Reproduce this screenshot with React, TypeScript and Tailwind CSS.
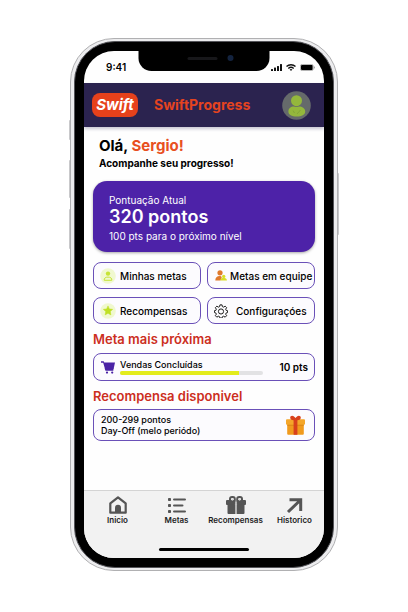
import React from "react";

type SideButtonProps = { className: string };

const Signal = () => (
  <svg className="h-[7px] w-[11px]" viewBox="0 0 11 7" fill="#111" aria-hidden="true">
    <rect x="0" y="5" width="2" height="2" rx=".5" />
    <rect x="3" y="3.6" width="2" height="3.4" rx=".5" />
    <rect x="6" y="2" width="2" height="5" rx=".5" />
    <rect x="9" y="0" width="2" height="7" rx=".5" />
  </svg>
);

const Wifi = () => (
  <svg className="h-[7px] w-[10px]" viewBox="0 0 20 14" fill="none" stroke="#111" strokeWidth="2.8" aria-hidden="true">
    <path d="M1 5.2a13 13 0 0 1 18 0" />
    <path d="M4.6 8.8a8 8 0 0 1 10.8 0" />
    <path d="M10 14 7.3 11.2a4 4 0 0 1 5.4 0z" fill="#111" stroke="none" />
  </svg>
);

const Battery = () => (
  <svg className="h-[7px] w-[15px]" viewBox="0 0 15 7" aria-hidden="true">
    <rect x=".4" y=".4" width="12.8" height="6.2" rx="1.8" fill="none" stroke="#888" strokeWidth=".7" />
    <rect x="1" y="1" width="11.6" height="5" rx="1" fill="#000" />
    <path d="M14 2.3c.9.3.9 2.1 0 2.4z" fill="#777" />
  </svg>
);

const Avatar = () => (
  <svg className="size-[29px]" viewBox="0 0 29 29" aria-hidden="true">
    <circle cx="14.5" cy="14.5" r="14.3" fill="#656a6b" />
    <circle cx="14.5" cy="9.7" r="5.5" fill="#94b83c" />
    <path
      d="M6.4 20.6c0-3.4 2.7-5 5.3-5 1 0 1.9.5 2.8.5s1.800-.5 2.800-.5c2.600 0 5.900 1.600 5.900 5 0 3.200-3.500 5-8.500 5s-8.300-1.800-8.300-5z"
      fill="#94b83c"
    />
    <path d="m15 23 3.500-4M12.500 22 11 19.500" stroke="#7fa236" strokeWidth=".8" />
  </svg>
);

const PersonIcon = () => (
  <svg className="size-4 shrink-0" viewBox="0 0 16 16" aria-hidden="true">
    <circle cx="8" cy="8" r="7.8" fill="#f0f8cf" />
    <circle cx="8" cy="5.6" r="2.2" fill="#c6e436" />
    <path
      d="M4.200 12.300c-.4-2.200 1.500-3.200 3.800-3.200s4.200 1 3.800 3.200z"
      fill="none"
      stroke="#c6e436"
      strokeLinejoin="round"
    />
  </svg>
);

const StarIcon = () => (
  <svg className="size-4 shrink-0" viewBox="0 0 16 16" aria-hidden="true">
    <circle cx="8" cy="8" r="7.8" fill="#f0f8cf" />
    <path
      d="m8 2.900 1.400 3 3.300.4-2.400 2.300.6 3.300L8 10.300l-2.900 1.600.6-3.300-2.400-2.300 3.300-.4z"
      fill="#bfe025"
      stroke="#bfe025"
      strokeWidth=".5"
      strokeLinejoin="round"
    />
  </svg>
);

const TeamIcon = () => (
  <svg className="h-[11px] w-3 shrink-0" viewBox="0 0 12 11" aria-hidden="true">
    <circle cx="5" cy="2.8" r="2.600" fill="#e07a2c" />
    <path d="M.3 10.500C.3 7.600 2 6 4.500 6c1.300 0 2 .5 2.300 1.200l-1.300 3.300z" fill="#e07a2c" />
    <circle cx="8.700" cy="6.400" r="1.700" fill="#d9de26" />
    <path d="M5.500 10.500c0-1.900 1.200-2.700 3.100-2.700s3.300.8 3.300 2.700z" fill="#d9de26" />
  </svg>
);

const GearIcon = () => (
  <svg
    className="size-[14px] shrink-0"
    viewBox="0 0 24 24"
    fill="none"
    stroke="#1a1a1a"
    strokeWidth="1.700"
    strokeLinejoin="round"
    aria-hidden="true"
  >
    <path d="M10.200 1.500h3.600l.6 3 2.200.9 2.500-1.700 2.600 2.600-1.700 2.500.9 2.200 2.400.5v3.200l-2.400.6-.9 2.200 1.700 2.500-2.600 2.600-2.500-1.700-2.200.9-.6 2.400h-3.600l-.6-2.400-2.200-.9-2.500 1.700-2.600-2.600 1.700-2.500-.9-2.200-2.400-.6v-3.200l2.400-.5.9-2.200-1.700-2.500 2.600-2.600 2.500 1.700 2.200-.9z" />
    <circle cx="12" cy="12.800" r="4.400" />
  </svg>
);

const CartIcon = () => (
  <svg className="h-[13px] w-[14px] shrink-0" viewBox="0 0 14 13" fill="#4a23a5" aria-hidden="true">
    <path d="M0 .3h2.700l.5 1.300H14L12.600 8H4L2.200 1.700H0z" />
    <path d="M3.600 7.500h9l-.3 2.300H4.500z" />
    <circle cx="6" cy="11.600" r="1.100" />
    <circle cx="11.200" cy="11.600" r="1.100" />
  </svg>
);

const GiftColor = () => (
  <svg className="h-5 w-[19px]" viewBox="0 0 19 20" aria-hidden="true">
    <path d="M1.200 8.500h16.600v10.300q0 1-1 1H2.200q-1 0-1-1z" fill="#f09a1d" />
    <rect x="0" y="4.200" width="19" height="5.600" rx="1" fill="#f4a62a" />
    <path d="M1.200 9.800h16.600v.9H1.200z" fill="#d98616" />
    <rect x="7.600" y="4.200" width="3.800" height="15.600" fill="#d8401c" />
    <path
      d="M9.500 4.800C8 5.600 4.500 5.600 4.200 2.800 4 .7 6.500.2 7.700 1.300c.8.700 1.500 1.200 1.800 1.700.3-.5 1-1 1.800-1.700 1.200-1.100 3.700-.6 3.500 1.500-.3 2.800-3.800 2.800-5.300 2z"
      fill="#d8401c"
    />
  </svg>
);

const HomeIcon = () => (
  <svg className="size-[18px]" viewBox="0 0 18 18" aria-hidden="true">
    <path d="M1.300 7.300 9 1.300l7.700 6v9.400H1.300z" fill="none" stroke="#555" strokeWidth="2.200" strokeLinejoin="round" />
    <path d="M6 17v-5.200a3 3 0 0 1 6 0V17z" fill="#555" />
  </svg>
);

const ListIcon = () => (
  <svg className="size-[18px]" viewBox="0 0 18 18" fill="#555" aria-hidden="true">
    <rect x="0" y="2" width="3" height="3" rx=".8" />
    <rect x="0" y="8" width="3" height="3" rx=".8" />
    <rect x="0" y="14" width="3" height="3" rx=".8" />
    <rect x="5" y="2.400" width="13" height="2.200" rx="1.100" />
    <rect x="5" y="8.400" width="10.500" height="2.200" rx="1.100" />
    <rect x="5" y="14.400" width="13" height="2.200" rx="1.100" />
  </svg>
);

const GiftGray = () => (
  <svg className="h-[18px] w-5" viewBox="0 0 20 18" aria-hidden="true">
    <rect x="4" y="1" width="4.800" height="4.800" rx="2" fill="none" stroke="#555" strokeWidth="2" />
    <rect x="11.200" y="1" width="4.800" height="4.800" rx="2" fill="none" stroke="#555" strokeWidth="2" />
    <rect x="0" y="4" width="9.400" height="5" rx="1" fill="#555" />
    <rect x="10.600" y="4" width="9.400" height="5" rx="1" fill="#555" />
    <circle cx="6.400" cy="3.600" r="1.100" fill="#d8d8d8" />
    <circle cx="13.600" cy="3.600" r="1.100" fill="#d8d8d8" />
    <path d="M1.500 8.500h7.900V18H2.500q-1 0-1-1zM10.600 8.500h7.900V17q0 1-1 1h-6.900z" fill="#555" />
  </svg>
);

const ArrowIcon = () => (
  <svg className="size-[18px]" viewBox="0 0 18 18" fill="none" stroke="#555" strokeWidth="3" aria-hidden="true">
    <path d="M3.500 3.800h11.200V15M14.500 4 2 16" />
  </svg>
);

const actions = [
  { label: "Minhas metas", Icon: PersonIcon, row: "gap-1 pl-[6px]" },
  { label: "Metas em equipe", Icon: TeamIcon, row: "gap-[3px] pl-[7px]" },
  { label: "Recompensas", Icon: StarIcon, row: "gap-1 pl-[6px]" },
  { label: "Configuraçóes", Icon: GearIcon, row: "gap-2 pl-[6px]" },
];

const tabs = [
  { label: "Inicio", Icon: HomeIcon },
  { label: "Metas", Icon: ListIcon },
  { label: "Recompensas", Icon: GiftGray },
  { label: "Historico", Icon: ArrowIcon },
];

const SideButton = ({ className }: SideButtonProps) => (
  <span className={`absolute w-[2px] rounded-sm bg-[#c9c9cb] ${className}`} />
);

export default function App() {
  return (
    <div className="min-h-screen bg-white px-4 pt-[38px] pb-10 font-['Inter','Liberation_Sans',sans-serif] text-black">
      <div className="relative mx-auto aspect-[268/533] w-full max-w-[268px]">
        <SideButton className="top-[82px] -left-px h-5" />
        <SideButton className="top-[122px] -left-px h-[38px]" />
        <SideButton className="top-[171px] -left-px h-10" />
        <SideButton className="top-[135px] -right-px h-[62px]" />
        <div className="relative flex h-full rounded-[44px] border border-[#b0b0b2] bg-[#ececee] px-[3px] py-[2px]">
          <div className="flex w-full rounded-[41px] border border-[#55555a] bg-black px-[9px] py-[9px]">
            <div className="relative flex w-full flex-col overflow-hidden rounded-[30px] bg-[#fefefe]">
              <div className="absolute top-0 left-1/2 flex h-5 w-[131px] -translate-x-1/2 items-center gap-[10px] rounded-b-[13px] bg-black pb-[6px] pl-[49px]">
                <span className="h-[3px] w-[30px] rounded-full bg-[#17171a]" />
                <span className="size-[6px] rounded-full bg-[#13233f]" />
              </div>
              <div className="flex h-8 shrink-0 items-center justify-between pr-[9px] pl-[22px]">
                <span className="text-[10px] leading-3 font-semibold">9:41</span>
                <span className="flex items-center gap-1">
                  <Signal />
                  <Wifi />
                  <Battery />
                </span>
              </div>

              <header className="z-10 flex h-11 shrink-0 items-center bg-[#2b234f] pr-[13px] pl-2 shadow-[0_2px_3px_rgba(43,35,79,0.25)]">
                <span className="flex h-6 w-[46px] items-center justify-center rounded-lg bg-[#e6411b] text-[15px] leading-5 font-bold text-white italic">
                  Swift
                </span>
                <h1 className="ml-4 flex-1 text-[14px] leading-5 font-bold text-[#e5431f]">SwiftProgress</h1>
                <button type="button" aria-label="Perfil">
                  <Avatar />
                </button>
              </header>

              <main className="flex-1 px-[9px] pt-[9px]">
                <div className="px-[6px]">
                  <h2 className="text-[15px] leading-5 font-bold">
                    Olá, <span className="text-[#e8501f]">Sergio!</span>
                  </h2>
                  <p className="text-[10px] leading-[14px] font-bold">Acompanhe seu progresso!</p>
                </div>

                <section className="mt-[11px] rounded-[14px] bg-[#4d22a8] px-4 pt-3 pb-[9px] text-white shadow-[0_1px_3px_rgba(0,0,0,0.35)]">
                  <p className="text-[10px] leading-[14px]">Pontuação Atual</p>
                  <p className="text-[18px] leading-5 font-semibold">320 pontos</p>
                  <p className="mt-[2px] text-[10px] leading-[14px]">100 pts para o próximo nível</p>
                </section>

                <div className="mt-[10px] grid grid-cols-2 gap-x-[6px] gap-y-2">
                  {actions.map(({ label, Icon, row }) => (
                    <button
                      key={label}
                      type="button"
                      className={`flex h-[27px] items-center rounded-lg border border-[#6a50b8] bg-[#fcfbfe] text-[10px] leading-[14px] font-medium whitespace-nowrap ${row}`}
                    >
                      <Icon />
                      {label}
                    </button>
                  ))}
                </div>

                <h3 className="mt-[6px] text-[13px] leading-[18px] font-semibold text-[#cc2f1e]">Meta mais próxima</h3>
                <section className="mt-[5px] flex h-7 items-center rounded-lg border border-[#6a50b8] bg-[#fcfbfe] pr-[6px] pl-[7px]">
                  <CartIcon />
                  <div className="ml-[5px] w-[143px]">
                    <p className="text-[9px] leading-3 font-medium">Vendas Concluídas</p>
                    <div
                      role="progressbar"
                      aria-label="Vendas Concluídas"
                      aria-valuenow={83}
                      className="h-1 overflow-hidden rounded-full bg-[#e2e2e4]"
                    >
                      <div className="h-full w-5/6 bg-[#e3ec1c]" />
                    </div>
                  </div>
                  <span className="ml-auto text-[10px] leading-[14px] font-semibold">10 pts</span>
                </section>

                <h3 className="mt-[6px] text-[13px] leading-[18px] font-semibold text-[#cc2f1e]">
                  Recompensa disponivel
                </h3>
                <section className="mt-1 flex items-center justify-between rounded-lg border border-[#6a50b8] bg-[#fcfbfe] py-1 pr-[9px] pl-[7px]">
                  <p className="text-[9px] leading-[11px] font-medium">
                    200-299 pontos
                    <br />
                    Day-Off (melo periódo)
                  </p>
                  <GiftColor />
                </section>
              </main>

              <nav className="flex h-[68px] shrink-0 flex-col justify-between border-t border-[#d4d4d4] bg-[#f2f2f2] pt-[5px] pb-[7px]">
                <div className="grid grid-cols-4 pl-1">
                  {tabs.map(({ label, Icon }) => (
                    <a
                      key={label}
                      href="#"
                      className="flex flex-col items-center text-[8px] leading-3 font-semibold text-[#1c1c1c]"
                    >
                      <Icon />
                      {label}
                    </a>
                  ))}
                </div>
                <span className="mx-auto h-[3px] w-[90px] rounded-full bg-black" />
              </nav>
            </div>
          </div>
        </div>
      </div>
    </div>
  );
}
